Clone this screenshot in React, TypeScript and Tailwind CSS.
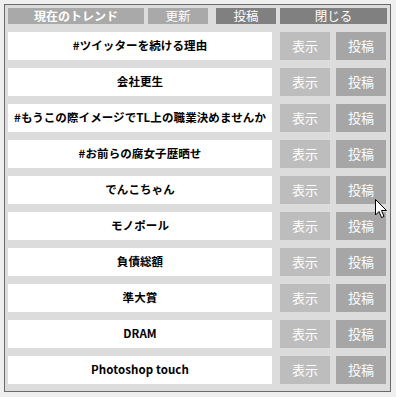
import React from "react";

const rows = [
  "#ツイッターを続ける理由",
  "会社更生",
  "#もうこの際イメージでTL上の職業決めませんか",
  "#お前らの腐女子歴晒せ",
  "でんこちゃん",
  "モノポール",
  "負債総額",
  "準大賞",
  "DRAM",
  "Photoshop touch",
];

const font = { fontFamily: '"Noto Sans CJK JP", "Liberation Sans", sans-serif' };

export default function App() {
  return (
    <div className="relative w-[396px] h-[397px] bg-[#efefef] overflow-hidden" style={font}>
      <div className="absolute left-[4px] top-[4px] w-[387px] h-[388px] border border-[#6a6a6a] bg-[#dcdcdc] pl-[3px] pr-[3px] pt-[3px]">
        <div className="flex h-[16px] text-white leading-[16px]">
          <div className="w-[136px] bg-[#a9a9a9] text-center text-[12px] font-bold">現在のトレンド</div>
          <div className="ml-[4px] w-[60px] bg-[#a9a9a9] text-center text-[12.5px]">更新</div>
          <div className="ml-[8px] w-[60px] bg-[#808080] text-center text-[12.5px]">投稿</div>
          <div className="ml-[4px] w-[107px] bg-[#808080] text-center text-[12.5px]">閉じる</div>
        </div>
        <div className="mt-[8px] flex flex-col gap-[8px]">
          {rows.map((r) => (
            <div key={r} className="flex h-[28px]">
              <div className="w-[264px] bg-white flex items-center justify-center text-[11.5px] font-bold text-black tracking-[0.1px]">
                {r}
              </div>
              <div className="ml-[8px] w-[50px] bg-[#bdbdbd] flex items-center justify-center text-[13px] text-white">
                表示
              </div>
              <div className="ml-[6px] w-[50px] bg-[#a6a6a6] flex items-center justify-center text-[13px] text-white">
                投稿
              </div>
            </div>
          ))}
        </div>
      </div>
      <svg className="absolute left-[375px] top-[199px]" width="13" height="21" viewBox="0 0 13 21">
        <path d="M0.5 0.5 L0.5 16 L4 12.5 L6.5 18.5 L9 17.5 L6.5 11.5 L11.5 11.5 Z" fill="white" stroke="black" strokeWidth="1" />
      </svg>
    </div>
  );
}
